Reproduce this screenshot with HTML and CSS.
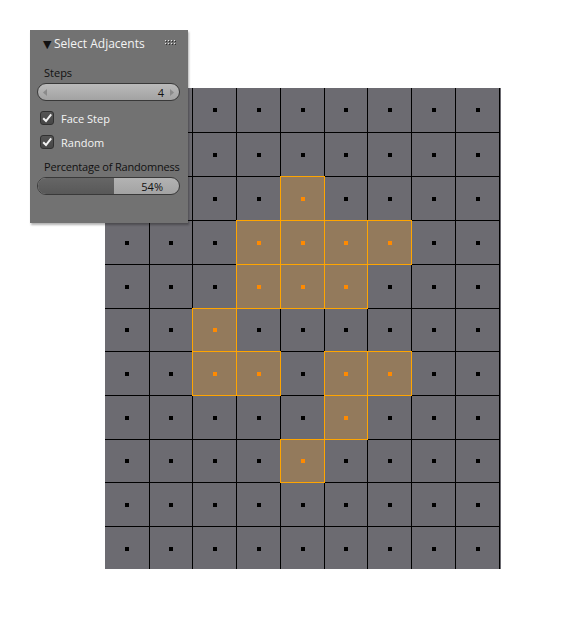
FILE: index.html
```html
<!DOCTYPE html>
<html>
<head>
<meta charset="utf-8">
<link rel="stylesheet" href="styles.css">
</head>
<body>
<div class="viewport">
  <div class="mesh">
    <div class="grid">
      <i class="c"></i><i class="c"></i><i class="c"></i><i class="c"></i><i class="c"></i><i class="c"></i><i class="c"></i><i class="c"></i><i class="c"></i>
      <i class="c"></i><i class="c"></i><i class="c"></i><i class="c"></i><i class="c"></i><i class="c"></i><i class="c"></i><i class="c"></i><i class="c"></i>
      <i class="c"></i><i class="c"></i><i class="c"></i><i class="c"></i><i class="c s"></i><i class="c"></i><i class="c"></i><i class="c"></i><i class="c"></i>
      <i class="c"></i><i class="c"></i><i class="c"></i><i class="c s"></i><i class="c s"></i><i class="c s"></i><i class="c s"></i><i class="c"></i><i class="c"></i>
      <i class="c"></i><i class="c"></i><i class="c"></i><i class="c s"></i><i class="c s"></i><i class="c s"></i><i class="c"></i><i class="c"></i><i class="c"></i>
      <i class="c"></i><i class="c"></i><i class="c s"></i><i class="c"></i><i class="c"></i><i class="c"></i><i class="c"></i><i class="c"></i><i class="c"></i>
      <i class="c"></i><i class="c"></i><i class="c s"></i><i class="c s"></i><i class="c"></i><i class="c s"></i><i class="c s"></i><i class="c"></i><i class="c"></i>
      <i class="c"></i><i class="c"></i><i class="c"></i><i class="c"></i><i class="c"></i><i class="c s"></i><i class="c"></i><i class="c"></i><i class="c"></i>
      <i class="c"></i><i class="c"></i><i class="c"></i><i class="c"></i><i class="c s"></i><i class="c"></i><i class="c"></i><i class="c"></i><i class="c"></i>
      <i class="c"></i><i class="c"></i><i class="c"></i><i class="c"></i><i class="c"></i><i class="c"></i><i class="c"></i><i class="c"></i><i class="c"></i>
      <i class="c"></i><i class="c"></i><i class="c"></i><i class="c"></i><i class="c"></i><i class="c"></i><i class="c"></i><i class="c"></i><i class="c"></i>
    </div>
  </div>

  <div class="panel">
    <div class="panel-head">
      <span class="tri">▼</span>
      <span class="title">Select Adjacents</span>
      <svg class="grip" width="12" height="6" viewBox="0 0 12 6">
        <g fill="#e6e6e6">
          <rect x="0" y="0" width="1" height="1"/><rect x="3" y="0" width="1" height="1"/><rect x="6" y="0" width="1" height="1"/><rect x="9" y="0" width="1" height="1"/>
          <rect x="0" y="3" width="1" height="1"/><rect x="3" y="3" width="1" height="1"/><rect x="6" y="3" width="1" height="1"/><rect x="9" y="3" width="1" height="1"/>
        </g>
        <g fill="#2e2e2e">
          <rect x="1" y="1" width="1" height="1"/><rect x="4" y="1" width="1" height="1"/><rect x="7" y="1" width="1" height="1"/><rect x="10" y="1" width="1" height="1"/>
          <rect x="1" y="4" width="1" height="1"/><rect x="4" y="4" width="1" height="1"/><rect x="7" y="4" width="1" height="1"/><rect x="10" y="4" width="1" height="1"/>
        </g>
      </svg>
    </div>

    <div class="label">Steps</div>
    <div class="numfield">
      <svg class="arrow" width="4" height="7" viewBox="0 0 4 7"><path d="M4 0 L0 3.5 L4 7 Z" fill="#8a8a8a"/></svg>
      <span class="val">4</span>
      <svg class="arrow" width="4" height="7" viewBox="0 0 4 7"><path d="M0 0 L4 3.5 L0 7 Z" fill="#8a8a8a"/></svg>
    </div>

    <div class="check-row first">
      <span class="box"><svg width="12" height="12" viewBox="0 0 12 12"><path d="M2.2 6.2 L5 9 L10.2 2.4" fill="none" stroke="#f2f2f2" stroke-width="2"/></svg></span>
      <span class="check-label">Face Step</span>
    </div>
    <div class="check-row">
      <span class="box"><svg width="12" height="12" viewBox="0 0 12 12"><path d="M2.2 6.2 L5 9 L10.2 2.4" fill="none" stroke="#f2f2f2" stroke-width="2"/></svg></span>
      <span class="check-label">Random</span>
    </div>

    <div class="label label-pct">Percentage of Randomness</div>
    <div class="slider">
      <div class="fill" style="width: 54%"></div>
      <span class="val">54%</span>
    </div>
  </div>
</div>
</body>
</html>
```

FILE: styles.css
```css
html, body {
  margin: 0;
  padding: 0;
  background: #ffffff;
}

body {
  font-family: "Open Sans", "DejaVu Sans", sans-serif;
}

.viewport {
  position: relative;
  width: 574px;
  height: 618px;
}

.mesh {
  padding: 88px 0 0 105px;
}

.grid {
  width: 396px;
  height: 481px;
  overflow: hidden;
  background: #6c6b71;
  display: grid;
  grid-template-columns: 45px 43px 44px 44px 44px 43px 44px 44px 44px;
  grid-template-rows: 45px 44px 44px 44px 44px 43px 44px 44px 43px 44px 44px;
}

.c {
  position: relative;
  box-sizing: border-box;
  border-right: 1px solid #000;
  border-bottom: 1px solid #000;
  display: flex;
  align-items: center;
  justify-content: center;
}

.c::before {
  content: "";
  width: 4px;
  height: 4px;
  background: #000;
}

.c.s {
  background: #937a5c;
}

.c.s::before {
  background: #ff8a00;
}

.c.s::after {
  content: "";
  position: absolute;
  left: -1px;
  top: -1px;
  right: -1px;
  bottom: -1px;
  border: 1px solid #ffa500;
  z-index: 1;
}

/* Operator panel */
.panel {
  position: absolute;
  left: 30px;
  top: 30px;
  width: 158px;
  height: 193px;
  box-sizing: border-box;
  padding: 0 8px 0 7px;
  background: #727272;
  box-shadow: 1px 2px 2px rgba(0, 0, 0, 0.3);
  display: flex;
  flex-direction: column;
  z-index: 5;
}

.panel-head {
  height: 26px;
  display: flex;
  align-items: center;
  padding-left: 6px;
  color: #f4f4f4;
  font-size: 12px;
}

.tri {
  font-size: 11px;
  width: 11px;
  color: #111;
}

.title {
  flex: 1;
}

.grip {
  margin-right: 3px;
}

.label {
  margin-top: 10px;
  padding-left: 7px;
  height: 14px;
  line-height: 14px;
  font-size: 11px;
  color: #111;
  white-space: nowrap;
}

.label-pct {
  margin-top: 6px;
  letter-spacing: -0.2px;
}

.numfield {
  margin-top: 3px;
  height: 18px;
  box-sizing: border-box;
  border: 1px solid #393939;
  border-radius: 9px;
  background: linear-gradient(#bababa, #a2a2a2);
  display: flex;
  align-items: center;
  padding: 0 5px 0 5px;
  font-size: 11px;
  color: #111;
}

.numfield .val {
  flex: 1;
  text-align: right;
  padding-right: 6px;
}

.check-row {
  height: 24px;
  display: flex;
  align-items: center;
  padding-left: 3px;
  font-size: 11px;
  color: #f4f4f4;
}

.check-row.first {
  margin-top: 5px;
}

.box {
  width: 14px;
  height: 14px;
  box-sizing: border-box;
  border: 1px solid #303030;
  border-radius: 3px;
  background: linear-gradient(#555555, #464646);
  display: flex;
  align-items: center;
  justify-content: center;
  margin-right: 7px;
}

.slider {
  position: relative;
  margin-top: 3px;
  height: 18px;
  box-sizing: border-box;
  border: 1px solid #393939;
  border-radius: 9px;
  background: linear-gradient(#b3b3b3, #a3a3a3);
  overflow: hidden;
  display: flex;
  align-items: center;
  justify-content: flex-end;
  font-size: 11px;
  color: #111;
}

.slider .fill {
  position: absolute;
  left: 0;
  top: 0;
  bottom: 0;
  background: linear-gradient(#666666, #585858);
}

.slider .val {
  position: relative;
  padding-right: 16px;
}
```
